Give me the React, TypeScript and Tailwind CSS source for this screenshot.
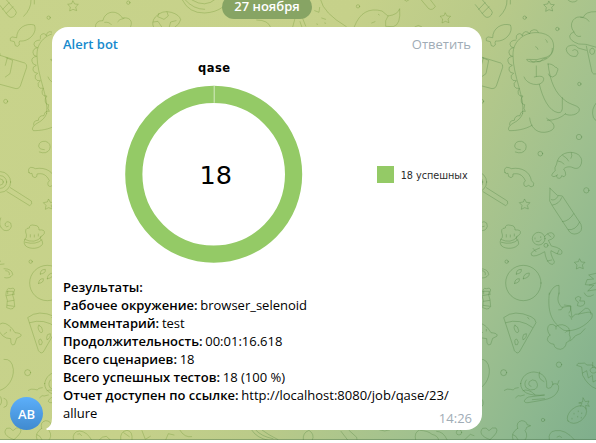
const results = [
  { label: 'Результаты:', value: '' },
  { label: 'Рабочее окружение:', value: 'browser_selenoid' },
  { label: 'Комментарий:', value: 'test' },
  { label: 'Продолжительность:', value: '00:01:16.618' },
  { label: 'Всего сценариев:', value: '18' },
  { label: 'Всего успешных тестов:', value: '18 (100 %)' },
  { label: 'Отчет доступен по ссылке:', value: 'http://localhost:8080/job/qase/23/allure' },
];

const star = 'm0 -15 5 9 11 1-8 8 3 11-11-4-10 5 2-12-8-8 11-2z';

/* One tile of the wallpaper; three drawing units make one pixel. */
function Doodles() {
  return (
    <g id="tile">
      {/* upper part */}
      <g>
        <path d="M-14 14 14 49q10 8 20-4 6-8 0-14L4 -4M-4 28 15 8M7 40 27 20M59 49Q82 27 81 0M91 0v12" />
        <circle cx="134" cy="53" r="5" />
        <circle cx="232" cy="87" r="5" />
        <circle cx="298" cy="252" r="5" />
        <circle cx="297" cy="411" r="8" />
        <circle cx="5" cy="304" r="6" />
        <path d="M38 112C38 84 66 68 91 75 101 96 77 126 47 123q-3 3-1 12-5 7-12 2l-3-12-12-3q-3-9 4-11z" />
        <path d="M-60 158 -12 160 -12 166 62 189q8 4 6 13L49 258q-4 9-13 8L-60 240M6 173l20 8-8 40-14 10 M10 174l-6 22" />
        <path transform="translate(207 19)" d={star} />
        <path d="M264 0q12 12 27 2" />
        <path d="M128 340C135 290 99 230 99 165 98 118 140 95 174 98c34 2 51 22 46 50-5 25-30 38-61 38q-18 0-19-8 31 5 61-7 18-8 16-26" />
        <path d="M151 180q8 12 17 2 11 9 20-5l12-3M167 140q6 2 7 8M197 119q5 3 5 8" />
        <path d="M108 120q-18 1-18 13 1 10 11 10-15 3-14 15 0 10 11 11-17 3-14 15 1 10 13 12-13 4-10 14 2 9 14 10-11 5-7 15 3 9 15 7-10 7-6 17 3 8 15 6-6 8-3 17 3 8 14 6-8 8-5 18 2 8 10 8-5 13 2 20 -14-3-16 13-16-1-17 14-16 0-14 14" />
        <path d="M109 116q-2-13 9-15 7-1 9 7 0-11 9-13 10-1 12 7 2-12 14-13 11-1 13 8" />
        <path d="M128 340Q123 358 99 370C87 377 82 387 88 392c20 0 46-3 68-16M149 354c2 25 18 44 43 43 17-1 30-8 30-17 0-12-13-18-22-25M202 361q33 0 55-20M256 342c12 8 40 2 42-12 2-14-26-14-42-28-30-22-46-56-52-112" />
        <path d="M178 253c10 42 29 80 56 85q15 2 13-21V293M132 231c8 24 48 30 57 13 8-16-8-18-26-13M169 198v31M204 193q8-5 23 9 10 2 5 12-2 14-14 17-12-1-13-9" />
        <path d="M121 449q-17-1-17-11 2-16 21-14 18 6 12 24-9 16-31 8" />
        <path d="M360 145 318 133 296 132Q268 122 269 108 272 98 282 96 268 78 279 61 289 47 310 52q6-18 38-17M302 109q-14 4-20-13M302 52q18 0 25 12" />
        <path d="M319 151 294 144q-7-11-21-8-20 4-12 20 9 16 28 13 9-10 3-17-8-7-14-1M319 138l17 79q3 7 12 5M335 145q-8 2-5 14 5 8 12 2 6-10-2-16zM350 307q-18 21-10 45 6 11 12 12" />
      </g>
      {/* middle part */}
      <g transform="translate(0 435)">
        <circle cx="181" cy="26" r="7" />
        <circle cx="319" cy="136" r="8" />
        <circle cx="80" cy="350" r="5" />
        <path d="M75 83q-5-12 5-16 8 0 14 4c32-6 57 11 60 36q11 7 6 16-7 6-14-2-9 8-14 0-3-8 4-14C127 88 115 84 99 87q2 9-6 11-10-1-9-13-6 3-9-2z" />
        <path d="M218 85q-7 9 4 10 8-2 10-6-6 10 6 11 7-1 7-8 8 8 12-2 1-9-6-18c5-6 18-9 28-4 10 5 18 1 22-5 12-22-4-41-30-41-25 1-39 17-41 35q-8 12-5 19zM234 48q11 1 18 9M248 31q14 8 18 17M274 23q4 10-1 17" />
        <path transform="translate(134 178)" d={star} />
        <path transform="translate(299 357)" d={star} />
        <circle cx="-11" cy="111" r="31" />
        <circle cx="-11" cy="111" r="19" />
        <circle cx="-11" cy="111" r="9" />
        <path d="M19 128 82 168q5 9-5 14L9 140" />
        <path d="M210 130 209 168 218 184 264 254q9 17 27 12 19-6 12-28L247 153l-15-2-22-21zM214 164q11 5 20-10M218 180q20-3 27-22M247 230q20-1 34-24M265 254q22 3 34-23" />
        <path d="M67 269q-8-20 9-20 0-12 16-8 14 1 13 14 19-2 16 10-5 9-12 10v7q8 4 7 15c-9 15-37 17-51 6q-10-12 1-25zM62 283q31 15 50-7M64 292q33 9 50-8M79 269v7M91 270v6M103 267v6" />
        <circle cx="176" cy="281" r="19" />
        <path d="M193 275q16-18 27-9 10 13-15 20l9 17q36 7 32 22-5 9-33-8-3 8 10 33-1 12-13 6-12-8-16-36-30 18-39 11-8-10 24-22M203 267l10 9M237 315l-5 11M159 310l9 10M202 348l13-3M165 279v3M182 275v3M168 289q10 5 16-5" />
        <circle cx="198" cy="301" r="6" />
        <path d="M-10 209q-10 24 10 37 18 4 22-12 1-13-10-14-11 2-8 12 3 6 9 2" transform="translate(0 10)" />
        <circle cx="130" cy="414" r="53" />
        <path d="M109 387q-1-14 15-14 2 13-15 14zM130 401q0-16 18-17 1 15-18 17zM104 415q0-14 14-14 2 13-14 14z" />
        <path d="M0 371q25 0 26 18-9 13-24 9M5 377q14 1 11 12M0 357q-34 5-10-9M8 435q5-8 12-4 10-4 12 4-4 6-2 14M11 438v9" />
        <path d="M208 448Q219 420 237 421V447M348 385l-22 5 15 12-20 2-5 15 25 2-18 17 25-4M348 414l-20 6" />
      </g>
      {/* lower part */}
      <g transform="translate(0 879)">
        <path d="M8 -5h20l-2 11 4 14 2 20q-4 9-12 8L8 44 10 22 6 8zM8 8l20-4M11 25l18-3M10 37l20 3" />
        <path d="M-18 105Q-14 85 5 92c17 8 23 20 28 27 12 1 22 4 17 11l-12 6-6 18q-8 6-11-4l-1-13Q-8 137-18 105zM19 109v5M8 118l-8 6" />
        <path d="M72 73Q103 48 153 71q14 6 15 18L122 170q-8 18-18 4zM77 89Q120 75 157 103M105 97q10 3 11 16-1 10-9 3-9-14-2-19zM128 132q0-10 11-10 2 13-9 18zM106 154q-5-15 4-16 9 10 3 16zM143 73l4 5" />
        <path d="M208 0C201 61 217 90 252 112c31 6 66-13 83-37 8-24-10-18-38-12q-12-3-21 10l-5-34-26 4C229 25 234 13 237 0M296 63l20-17q15-3 17 18M236 51q9 3 13-8M253 36l20 3q0 16-6 21M267 67q8 3 8 12" />
        <path d="M287 14q8-8 16 0l-4 10 14 0q5 13-12 16l-9-2 3-11-6-4zM313 0q7 18 27 6" />
        <path d="M209 126q-13-20 0-31 10-4 19 5 20-12 38 5 5 10 2 20 9 16-9 24-2 17-18 20-19-2-19-15-18-3-20-15 0-9 9-13M228 100v8M267 113q-9 0-11 5M270 144l11-9q0-6 20-13l14-15" />
        <circle cx="71" cy="239" r="9" />
        <circle cx="237" cy="215" r="8" />
        <circle cx="189" cy="381" r="5" />
        <path d="M73 292q8-6 18-3 10 5 14-3l10-2M107 314q8-10 14-5l12-3M122 272c3-22 20-35 40-35 27 2 39 18 38 39q-2 10 5 10 9 2 14-13c16-4 20 7 15 20-12 27-41 27-90 36-17 1-12-11 2-17l48-6q-72 6-72-34zM179 237q-8 20 13 29M129 293q15-8 36 12M153 280q-10-2-5-14 9-9 19-3 12 16-2 26-15 6-26-4-9-13 0-24M219 275l-3-10M233 273l4-10M157 320l37-3" />
        <path d="M0 199q24-3 28 30C30 259 10 285-12 292Q-35 304-40 330q25 20 32 0 4-19-12-26M0 316q11 2 9 18 0 7-9 9" />
        <path d="M348 287q-25-9-40-40l-3-25-15-5q2-9 14-6 10-4 17 5l15 0 14 10M308 240l12-7 5 22 12-8 2 20 10-5M331 229q3-8 12-6 11 5 6 14-12 8-18-2zM338 222v-14" />
        <path d="M264 384q-8-14 11-34 27-22 43-4 7 19-15 37-23 16-39 1zM301 340l5-9-10-1 12-3 1-13 7 12 11-2-4 9 5 7-11-3 1 11M282 361v2M295 354v2M276 376v2M293 370v2M305 360v2M304 373v2" />
        <path d="M30 440C4 431-3 418 8 406q11-5 19 7 10-12 21-8 11 11-18 35zM113 406q-6-19 12-23 15 1 16 12l11 3-12 5q-2 8-5 9 12 19-3 32M113 406q-22 14-14 34M99 425q10 2 15 15M208 441q-5-25 18-28 30-5 57 27M231 432q7-7 14 1" />
      </g>
    </g>
  );
}

function Wallpaper() {
  return (
    <svg aria-hidden="true" className="absolute inset-0" width="596" height="440" viewBox="0 0 596 440" fill="none" strokeWidth="3" strokeLinecap="round" strokeLinejoin="round">
      <g transform="translate(480 0) scale(.333333)" stroke="#4f8442" strokeOpacity=".36"><Doodles /></g>
      <g stroke="#6b9230" strokeOpacity=".33">
        <g transform="translate(4 0) scale(.333333)"><use href="#tile" width="144" clipPath="url(#left)" /></g>
        {/* strip above the message */}
        <g transform="translate(50 0) scale(.333333)">
          <path transform="translate(69 18)" d={star} />
          <circle cx="235" cy="8" r="5" />
          <circle cx="552" cy="48" r="5" />
          <path d="M136 82q0-21 23-20c5-29 42-35 58-8 22-3 32 8 25 26M164 67q14-2 20 7M222 55q-15 2-19 10" />
          <path d="M311 82q-8-15 5-31 20-22 48-14 24 7 28 22-3 14-18 23M327 40l-4 10 19 8 13-10-4-12M310 66l14-2 12 18M358 80l4-14 16-4M397 0q20 40 67 39 34-2 53-17M406 0q25 28 58 28M426 0q40 25 71-3M620 60q35 0 42 22M735 55l20-7 12 30M735 55l-7 26M750 65l6 17" />
        </g>
        <g transform="translate(310 0) scale(.333333)">
          <path d="M32 0Q40 39 109 80M14 32l13 5 2-15M20 72l3 1M35 54l12 4M44 69l3 1M133 80q24-63 83-47l18 15q30-4 35-22 4 48-19 54l-23-1q-4-17 7-31M185 69l10-4M205 43l3 2M283 0q6 8 14 0M334 0l22 26q12 7 20-7L360-2M315 80q10-8 20 0" />
          <circle cx="144" cy="19" r="5" />
          <path transform="translate(406 54)" d={star} />
        </g>
        {/* strip below the message */}
        <g transform="translate(0 350) scale(.333333)">
          <path d="M220 270q-4-25 19-27 22 2 36 27M233 252q8-5 12 5M297 270q10-12 22-11l12 11M362 270q-3-26 19-29 18 2 15 29M371 248l17 12M426 242l10 26 15-9M497 270l8-19 17 4M540 241q14 23 35 19" />
        </g>
      </g>
      <g transform="translate(230 380) scale(.333333)" stroke="#4f8442" strokeOpacity=".33">
        <path d="M65 150q15 24 50 31M77 150q18 20 52 26M96 150q18 14 48 29M220 180q-3-22 17-29 18 12 10 29M333 154l20 26M357 151l23 21 1 8M449 150q15 6 30 0M557 180q-6-23 11-30M570 151q24 1 36 12 18 4 20 17M620 154q20 0 31 25M703 180l18-17 11 4" />
        <circle cx="687" cy="157" r="8" />
      </g>
      <clipPath id="left"><path d="M-12 0h156v1320H-12z" /></clipPath>
      <path d="M0 439.5h596" strokeWidth="1" stroke="#426b43" strokeOpacity=".4" />
    </svg>
  );
}

function ResultChart() {
  return (
    <svg className="block h-[222px] w-[430px]" viewBox="52 56 430 222" fontFamily="'DejaVu Sans', sans-serif">
      <text x="198" y="71.5" fontSize="11.5" fontWeight="700" textLength="32" fill="#000">qase</text>
      <circle cx="213.7" cy="174.3" r="79.9" fill="none" stroke="#94ca66" strokeWidth="17.2" />
      <path d="M214.2 85.8v17" stroke="#d5ebc2" />
      <text x="199.5" y="184" fontSize="25.5" textLength="32.5" lengthAdjust="spacingAndGlyphs" fill="#000">18</text>
      <path fill="#94ca66" d="M377 166h17v17h-17z" />
      <text x="400.7" y="179" fontSize="9.6" textLength="67" lengthAdjust="spacingAndGlyphs" fill="#2a2a2a">18 успешных</text>
    </svg>
  );
}

export default function App() {
  return (
    <main className="h-[443px] w-[596px] overflow-hidden bg-white font-['Open_Sans','Noto_Sans',sans-serif] text-[13px] leading-[18px] text-black">
      <div className="relative h-[440px] overflow-hidden bg-[linear-gradient(118deg,#c8d38b_0%,#c6d18a_43%,#b9ca89_60%,#9fc08f_79%,#8cb78f_91%,#7fae8c_100%)]">
        <Wallpaper />
        <div className="relative flex h-[27px] pl-[222px]">
          <div className="-mt-[5px] flex h-6 w-[90px] items-end justify-center rounded-full bg-[#87a464] pb-1 font-semibold text-white">27 ноября</div>
        </div>
        <div className="relative flex items-end pl-[10px]">
          <div className="mr-[9px] flex size-[33px] items-center justify-center rounded-full bg-linear-to-b from-[#5caffa] to-[#408acf] font-semibold text-white">AB</div>
          <article className="relative h-[403px] w-[430px] rounded-2xl rounded-bl-none bg-white">
            <svg className="absolute bottom-0 -left-1.5" width="6" height="12" viewBox="0 0 6 12"><path d="M6 0Q6 8 .5 10.5-.2 11.4 1 12h5z" fill="#fff" /></svg>
            <header className="flex h-[29px] items-end justify-between pr-[11px] pb-[3px] pl-[11px]">
              <span className="font-semibold text-[#168acd]">Alert bot</span>
              <span className="text-[#a0acb6]">Ответить</span>
            </header>
            <ResultChart />
            <div className="pl-[11px]">
              {results.map(({ label, value }) => (
                <p key={label} className="w-[400px] break-words">
                  <span className="font-semibold">{label}</span>{' '}
                  <span className="-ml-[0.7px]">{value.endsWith('/allure') ? <>{value.slice(0, -6)}<wbr />allure</> : value}</span>
                </p>
              ))}
            </div>
            <time className="absolute right-[10px] bottom-[3px] text-[#a0acb6]">14:26</time>
          </article>
        </div>
      </div>
    </main>
  );
}
